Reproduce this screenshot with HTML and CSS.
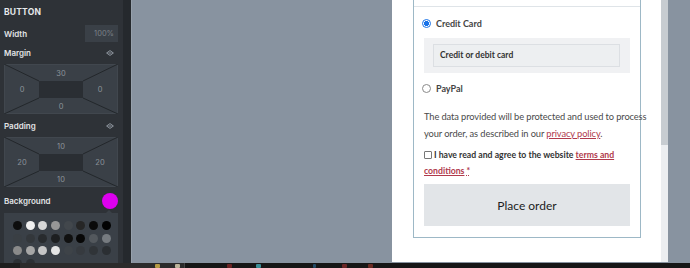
FILE: index.html
```html
<!DOCTYPE html>
<html>
<head>
<meta charset="utf-8">
<link rel="stylesheet" href="styles.css">
</head>
<body>
<div class="screen">
  <div class="main">
    <aside class="sidebar">
      <div class="panel">
        <div class="title">BUTTON</div>
        <div class="row row-width">
          <span class="label">Width</span>
          <span class="input">100%</span>
        </div>
        <div class="row row-head">
          <span class="label">Margin</span>
          <svg class="link" width="8" height="6" viewBox="0 0 8 6"><path d="M0.6 3 L4 0.6 L7.4 3 L4 5.4 Z M2.4 3 H5.6" fill="none" stroke="#9aa2aa" stroke-width="0.9"/></svg>
        </div>
        <div class="spacing">
          <svg class="diag" width="114" height="50" viewBox="0 0 114 50"><path d="M0 0 L35 17 M114 0 L79 17 M0 50 L35 34 M114 50 L79 34" stroke="#23272b" stroke-width="1"/></svg>
          <span class="v top">30</span>
          <span class="v left">0</span>
          <span class="inner"></span>
          <span class="v right">0</span>
          <span class="v bottom">0</span>
        </div>
        <div class="row row-head row-pad">
          <span class="label">Padding</span>
          <svg class="link" width="8" height="6" viewBox="0 0 8 6"><path d="M0.6 3 L4 0.6 L7.4 3 L4 5.4 Z M2.4 3 H5.6" fill="none" stroke="#9aa2aa" stroke-width="0.9"/></svg>
        </div>
        <div class="spacing">
          <svg class="diag" width="114" height="50" viewBox="0 0 114 50"><path d="M0 0 L35 17 M114 0 L79 17 M0 50 L35 34 M114 50 L79 34" stroke="#23272b" stroke-width="1"/></svg>
          <span class="v top">10</span>
          <span class="v left">20</span>
          <span class="inner"></span>
          <span class="v right">20</span>
          <span class="v bottom">10</span>
        </div>
        <div class="row row-bg">
          <span class="label">Background</span>
          <span class="swatch"></span>
        </div>
        <div class="palette">
          <span class="dot" style="background:#0d0d0d"></span>
          <span class="dot" style="background:#f0f0f0"></span>
          <span class="dot" style="background:#d6d6d6"></span>
          <span class="dot" style="background:#979797"></span>
          <span class="dot" style="background:#42474c"></span>
          <span class="dot" style="background:#262626"></span>
          <span class="dot" style="background:#0a0a0a"></span>
          <span class="dot" style="background:#020202"></span>
          <span class="dot" style="background:#3a3f44"></span>
          <span class="dot" style="background:#33373b"></span>
          <span class="dot" style="background:#282b2e"></span>
          <span class="dot" style="background:#1d1f21"></span>
          <span class="dot" style="background:#101010"></span>
          <span class="dot" style="background:#070707"></span>
          <span class="dot" style="background:#53585d"></span>
          <span class="dot" style="background:#767b80"></span>
          <span class="dot" style="background:#8a8a8a"></span>
          <span class="dot" style="background:#a6a6a6"></span>
          <span class="dot" style="background:#c6c6c6"></span>
          <span class="dot" style="background:#e4e4e4"></span>
          <span class="dot" style="background:#3e4348"></span>
          <span class="dot" style="background:#363a3f"></span>
          <span class="dot" style="background:#303438"></span>
          <span class="dot" style="background:#2b2f33"></span>
          <span class="dot" style="background:#2c3034"></span>
          <span class="dot" style="background:#2c3034"></span>
        </div>
      </div>
      <div class="strip"></div>
    </aside>
    <section class="canvas">
      <div class="page">
        <div class="card">
          <div class="sep"></div>
          <label class="method">
            <span class="radio checked"></span>
            <span class="mlabel">Credit Card</span>
          </label>
          <div class="cardbox">
            <div class="cardinput">Credit or debit card</div>
          </div>
          <label class="method">
            <span class="radio"></span>
            <span class="mlabel">PayPal</span>
          </label>
          <p class="privacy">The data provided will be protected and used to process<br>your order, as described in our <a href="#">privacy policy</a>.</p>
          <p class="terms"><span class="check"></span>I have read and agree to the website <a href="#">terms and<br>conditions</a> <abbr>*</abbr></p>
          <div class="place">Place order</div>
        </div>
      </div>
      <div class="scroll"><div class="thumb"></div></div>
    </section>
  </div>
  <footer class="taskbar">
    <div class="tb-left"></div>
    <div class="tb-band"><span class="ico y1"></span><span class="ico y2"></span></div>
    <div class="tb-rest"><span class="ico r1"></span><span class="ico c1"></span><span class="ico b1"></span><span class="ico r2"></span><span class="ico r3"></span></div>
  </footer>
</div>
</body>
</html>
```
FILE: styles.css
```css
* { box-sizing: border-box; }
html, body { margin: 0; padding: 0; }
body { width: 690px; height: 268px; overflow: hidden; background: #1b1b1b; }
.screen { display: grid; grid-template-rows: 263px 5px; width: 690px; height: 268px; }
.main { display: flex; height: 263px; overflow: hidden; }

.sidebar { display: flex; width: 131px; flex: none; background: #2e3237; font-family: Inter, "Noto Sans", sans-serif; color: #e6e8ea; }
.panel { width: 123px; padding: 0 5px 0 4px; display: flex; flex-direction: column; overflow: hidden; }
.panel > * { flex-shrink: 0; }
.strip { width: 8px; background: #25292d; }
.title { font-size: 8.5px; font-weight: 700; letter-spacing: 0.2px; height: 12px; margin-top: 6px; line-height: 12px; }
.row { display: flex; align-items: center; justify-content: space-between; }
.label { font-size: 8px; font-weight: 600; color: #e2e4e6; }
.row-width { margin-top: 7px; height: 17px; }
.input { width: 33px; height: 17px; background: #3a4047; color: #7a8188; font-size: 7.5px; display: flex; align-items: center; justify-content: flex-end; padding-right: 4px; }
.row-head { height: 12px; margin-top: 5px; margin-bottom: 5px; }
.row-pad { margin-top: 6px; }
.link { margin-right: 4px; }
.spacing { position: relative; width: 114px; height: 50px; background: #3a4047; border: 1px solid #41474e; display: grid; grid-template-columns: 34px 44px 34px; grid-template-rows: 16px 17px 15px; color: #8b9299; font-size: 7.5px; }
.spacing .diag { position: absolute; left: -1px; top: -1px; }
.v { position: relative; display: flex; align-items: center; justify-content: center; }
.v.top { grid-column: 2; grid-row: 1; padding-top: 1px; }
.v.left { grid-column: 1; grid-row: 2; }
.inner { grid-column: 2; grid-row: 2; background: #2a2e33; position: relative; }
.v.right { grid-column: 3; grid-row: 2; }
.v.bottom { grid-column: 2; grid-row: 3; padding-top: 2px; }
.row-bg { margin-top: 6px; height: 16px; }
.swatch { width: 16px; height: 16px; border-radius: 50%; background: #dd00ee; margin-right: 0px; }
.palette { position: relative; margin-top: 4px; width: 114px; height: 60px; background: #3a4047; display: grid; grid-template-columns: repeat(8, 9px); gap: 3.6px 3.7px; padding: 8px 0 0 9px; align-content: start; }
.palette::before { content: ""; position: absolute; right: 6px; top: -3px; border-left: 3px solid transparent; border-right: 3px solid transparent; border-bottom: 3px solid #3a4047; }
.dot { width: 9px; height: 9px; border-radius: 50%; }

.canvas { flex: 1; display: flex; background: #8893a0; padding-left: 260px; border-left: 1px solid #97a1ac; }
.page { width: 269px; height: 262px; background: #fff; padding: 0 20px 0 21px; font-family: Lato, "Open Sans", sans-serif; }
.scroll { width: 7px; height: 262px; background: #eceef1; }
.thumb { height: 145px; background: #c7ccd1; }

.card { height: 238px; border: 1px solid #9db8c6; border-top: none; padding: 6px 10px 0 10px; }
.sep { height: 1px; background: #dfe4e8; margin: 0 -10px 0 -10px; }
.method { display: flex; align-items: center; gap: 5px; height: 14px; font-size: 9px; font-weight: 700; color: #444; }
.card > .method:first-of-type { margin-top: 9px; }
.radio { width: 9px; height: 9px; border-radius: 50%; border: 1px solid #8a8a8a; background: #fff; margin-left: -2px; flex: none; }
.radio.checked { border-color: #1a73e8; background: radial-gradient(circle, #1a73e8 0 2.3px, #fff 2.8px); }
.cardbox { background: #f0f1f3; margin-top: 8px; height: 35px; padding: 6px 10px 0 9px; }
.cardinput { height: 23px; border: 1px solid #dcdfe3; background: #edeff1; font-size: 8.5px; font-weight: 700; color: #333; padding-left: 6px; line-height: 20px; }
.cardbox + .method { margin-top: 8px; }
.privacy { margin: 13px 0 0; font-size: 9.3px; letter-spacing: -0.1px; line-height: 17px; color: #4a4a4a; white-space: nowrap; }
a { color: #b03a4c; }
.terms { margin: 5px 0 0; font-size: 8.7px; line-height: 16px; font-weight: 700; color: #333; white-space: nowrap; }
.terms abbr { color: #b03a4c; text-decoration: underline dotted; }
.check { display: inline-block; width: 8px; height: 8px; border: 1px solid #777; border-radius: 1px; vertical-align: -1px; margin-right: 2px; }
.place { margin-top: 5px; height: 42px; background: #e2e5e8; display: flex; align-items: center; justify-content: center; font-size: 12px; color: #1d1d1d; }

.taskbar { display: flex; height: 5px; background: #161616; }
.tb-left { width: 20px; background: #1e1e1e; }
.tb-band { width: 165px; background: #2b2b2b; position: relative; border-right: 1px solid #444; }
.tb-rest { flex: 1; position: relative; }
.ico { position: absolute; top: 1px; width: 5px; height: 4px; border-radius: 1px; }
.y1 { left: 135px; background: #b59a44; }
.y2 { left: 155px; background: #bcb39a; }
.r1 { left: 42px; background: #6a2222; }
.c1 { left: 71px; background: #3a8d96; }
.b1 { left: 128px; width: 3px; background: #244a66; }
.r2 { left: 157px; background: #6a2626; }
.r3 { left: 183px; background: #6a2a22; }
```
